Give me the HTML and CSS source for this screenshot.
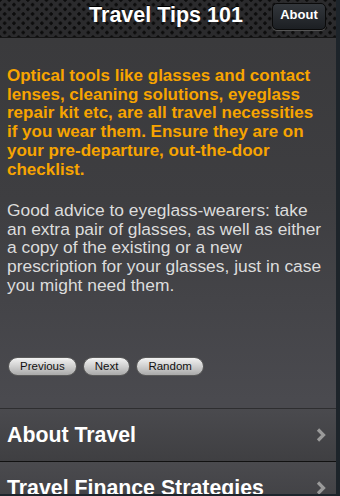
FILE: index.html
```html
<!DOCTYPE html>
<html>
<head>
<meta charset="utf-8">
<link rel="stylesheet" href="styles.css">
</head>
<body>
<div class="app">
  <header class="topbar">
    <h1 class="title">Travel Tips 101</h1>
    <button class="about-btn">About</button>
  </header>
  <main class="content">
    <p class="highlight">Optical tools like glasses and contact lenses, cleaning solutions, eyeglass repair kit etc, are all travel necessities if you wear them. Ensure they are on your pre-departure, out-the-door checklist.</p>
    <p class="body-text">Good advice to eyeglass-wearers: take an extra pair of glasses, as well as either a copy of the existing or a new prescription for your glasses, just in case you might need them.</p>
    <div class="nav-buttons">
      <button class="pill">Previous</button>
      <button class="pill">Next</button>
      <button class="pill">Random</button>
    </div>
  </main>
  <ul class="menu">
    <li class="menu-item"><span>About Travel</span><svg class="chev" width="10" height="14" viewBox="0 0 10 14"><path d="M2 1.5 L7.5 7 L2 12.5" fill="none" stroke="#9a9a9a" stroke-width="3.2"/></svg></li>
    <li class="menu-item"><span>Travel Finance Strategies</span><svg class="chev" width="10" height="14" viewBox="0 0 10 14"><path d="M2 1.5 L7.5 7 L2 12.5" fill="none" stroke="#9a9a9a" stroke-width="3.2"/></svg></li>
  </ul>
</div>
</body>
</html>
```
FILE: styles.css
```css
html, body {
  margin: 0;
  padding: 0;
  height: 496px;
  overflow: hidden;
  background: #1d242a;
}
body {
  font-family: "Liberation Sans", Arial, sans-serif;
}
.app {
  width: 336px;
  height: 496px;
  display: flex;
  flex-direction: column;
  background: linear-gradient(#39393b 0px, #3e3e41 200px, #4a4a4f 400px);
  overflow: hidden;
}
.topbar {
  height: 37px;
  flex: none;
  position: relative;
  display: flex;
  align-items: center;
  justify-content: center;
  background-color: #2b2b2d;
  background-image:
    radial-gradient(circle, #0c0c0c 1.4px, transparent 1.9px),
    radial-gradient(circle, #0c0c0c 1.4px, transparent 1.9px);
  background-size: 9.3px 9.3px, 9.3px 9.3px;
  background-position: 0 0, 4.65px 4.65px;
  border-bottom: 1px solid #151515;
}
.title {
  margin: 0 4px 6px 0;
  color: #fff;
  font-size: 21.5px;
  font-weight: bold;
  text-shadow: 0 -1px 0 #000;
}
.about-btn {
  position: absolute;
  right: 10px;
  top: 3px;
  width: 54px;
  height: 27px;
  border: 1px solid #0a0a0a;
  border-radius: 5px;
  background: linear-gradient(#33373c, #1c1f23);
  color: #fff;
  font-family: "Liberation Sans", Arial, sans-serif;
  font-weight: bold;
  font-size: 13px;
  padding: 0 0 5px 0;
  box-shadow: 0 1px 0 #555;
}
.content {
  flex: 1;
  padding: 0 14px 0 7px;
}
.highlight {
  margin: 29px 0 0 0;
  color: #f7a400;
  font-weight: bold;
  font-size: 17px;
  line-height: 18.7px;
}
.body-text {
  margin: 22px 0 0 0;
  color: #dcdcdc;
  font-size: 17.4px;
  line-height: 18.6px;
}
.nav-buttons {
  display: flex;
  gap: 6px;
  margin-top: 63px;
  padding-left: 1px;
}
.pill {
  height: 19px;
  border: 1px solid #5a5a5a;
  border-radius: 10px;
  background: linear-gradient(#f2f2f2, #cfcfcf 50%, #a9a9a9);
  color: #111;
  font-family: "Liberation Sans", Arial, sans-serif;
  font-size: 11.5px;
  padding: 0 11px;
  line-height: 17px;
}
.menu {
  list-style: none;
  margin: 0;
  padding: 0;
  flex: none;
  box-sizing: border-box;
  height: 88px;
  overflow: hidden;
  border-top: 1px solid #2e2e30;
  border-bottom: 2px solid #1d252c;
}
.menu-item {
  height: 52px;
  flex: none;
  display: flex;
  align-items: center;
  justify-content: space-between;
  padding: 0 10px 0 7px;
  color: #fff;
  font-size: 21.3px;
  font-weight: bold;
  background: linear-gradient(#4a4a4e, #3f3f42);
  border-bottom: 1px solid #111;
}
.chev {
  flex: none;
}
```
